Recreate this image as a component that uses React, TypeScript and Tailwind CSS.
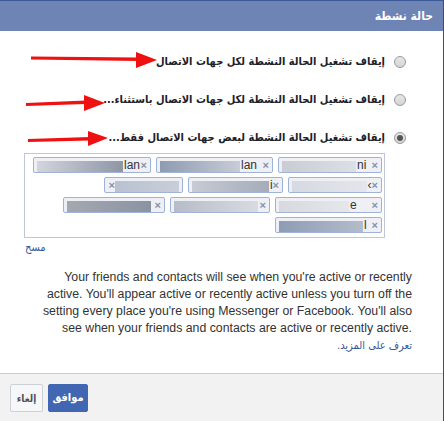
import React from 'react';

const arabic = { fontFamily: '"DejaVu Sans Condensed", "DejaVu Sans", Tahoma, sans-serif' };

type Token = {
  w: string;
  blur: string;
  grad: string;
  tail?: string;
  rtl?: boolean;
};

const tokens: Token[] = [
  { w: 'w-[104px]', blur: 'w-[74px]', grad: 'bg-gradient-to-r from-[#c9ccd3] to-[#dcdfe5]', tail: 'ni' },
  { w: 'w-[117px]', blur: 'w-[80px]', grad: 'bg-gradient-to-r from-[#8f9bb0] to-[#c8cdd6]', tail: 'lan' },
  { w: 'w-[118px]', blur: 'w-[86px]', grad: 'bg-gradient-to-r from-[#d3d5db] to-[#8e96a5]', tail: 'lan' },
  { w: 'w-[94px]', blur: 'w-[76px]', grad: 'bg-gradient-to-r from-[#d6d9e0] to-[#e4e6eb]', tail: '‹' },
  { w: 'w-[95px]', blur: 'w-[78px]', grad: 'bg-gradient-to-r from-[#c7cbd3] to-[#a5acb9]', tail: 'i' },
  { w: 'w-[79px]', blur: 'w-[64px]', grad: 'bg-gradient-to-r from-[#b9c2d1] to-[#c9ced8]', rtl: true },
  { w: 'w-[107px]', blur: 'w-[70px]', grad: 'bg-gradient-to-r from-[#d7d9df] to-[#e6e7eb]', tail: 'e' },
  { w: 'w-[100px]', blur: 'w-[84px]', grad: 'bg-gradient-to-r from-[#b6bcc8] to-[#d8dbe1]' },
  { w: 'w-[102px]', blur: 'w-[84px]', grad: 'bg-gradient-to-r from-[#a4a8b0] to-[#8b93a3]' },
  { w: 'w-[107px]', blur: 'w-[84px]', grad: 'bg-gradient-to-r from-[#8e9cb4] to-[#b4bccb]', tail: 'l' },
];

const Radio = ({ checked }: { checked?: boolean }) => (
  <div className="w-[12px] h-[12px] rounded-full border border-[#9a9a9a] bg-gradient-to-b from-[#e8e8e8] to-[#d4d4d4] flex items-center justify-center shrink-0">
    {checked && <div className="w-[6px] h-[6px] rounded-full bg-[#555]" />}
  </div>
);

const Option = ({ label, checked }: { label: string; checked?: boolean }) => (
  <div className="h-[24px] flex items-center gap-[9px]">
    <Radio checked={checked} />
    <span className="text-[11px] font-bold text-[#1d2129] whitespace-nowrap" style={arabic}>
      {label}
    </span>
  </div>
);

export default function App() {
  return (
    <div
      dir="rtl"
      className="relative w-[444px] h-[421px] bg-white border-r border-[#4d4d4d] flex flex-col overflow-hidden"
      style={{ fontFamily: '"Liberation Sans", Arial, sans-serif' }}
    >
      {/* header */}
      <div className="h-[31px] shrink-0 bg-[#6d84b4] border-t border-[#3b5998] flex items-center pr-[10px]">
        <span className="text-white text-[12px] font-bold" style={arabic}>
          حالة نشطة
        </span>
      </div>

      {/* body */}
      <div className="flex-1 pt-[19px]">
        <div className="pr-[37px] flex flex-col gap-[14px]">
          <Option label="إيقاف تشغيل الحالة النشطة لكل جهات الاتصال" />
          <Option label="إيقاف تشغيل الحالة النشطة لكل جهات الاتصال باستثناء..." />
          <Option label="إيقاف تشغيل الحالة النشطة لبعض جهات الاتصال فقط..." checked />
        </div>

        <div className="mt-[3px] mr-[58px] w-[361px] h-[85px] border border-[#bdc7d8] pt-[3px] pr-[2px] flex flex-wrap content-start gap-x-[5px] gap-y-[4px]">
          {tokens.map((t, i) => (
            <div
              key={i}
              dir={t.rtl ? 'rtl' : 'ltr'}
              className={`${t.w} h-[16px] border border-[#9fb3d6] rounded-[2px] bg-[#eef0f5] flex items-center px-[3px] text-[12px] leading-[14px] text-[#333]`}
            >
              <div className={`${t.blur} h-[11px] mt-[2px] ${t.grad}`} />
              {t.tail && <span className="ml-[1px]">{t.tail}</span>}
              <span className="ml-auto mr-0 text-[#8592ab] font-bold text-[11px]">×</span>
            </div>
          ))}
        </div>

        <div className="ml-[25px] mt-[2px] text-left text-[11px] leading-[14px]">
          <a href="#" className="text-[#365899]" style={arabic}>
            مسح
          </a>
        </div>

        <p
          dir="ltr"
          className="mt-[14px] pr-[31px] text-right text-[12.3px] leading-[17px] text-[#333] whitespace-nowrap"
        >
          Your friends and contacts will see when you're active or recently
          <br />
          active. You'll appear active or recently active unless you turn off the
          <br />
          setting every place you're using Messenger or Facebook. You'll also
          <br />
          see when your friends and contacts are active or recently active.
        </p>
        <div className="pr-[31px] text-[11px] leading-[16px]">
          <a href="#" className="text-[#365899]" style={arabic}>
            تعرف على المزيد.
          </a>
        </div>
      </div>

      {/* footer */}
      <div className="h-[48px] shrink-0 bg-[#f2f2f2] border-t border-[#ccc] flex justify-end items-start pt-[10px] pl-[10px] gap-[5px]">
        <button
          className="h-[28px] w-[40px] bg-[#4267b2] border border-[#4267b2] rounded-[2px] text-white text-[11px] font-bold"
          style={arabic}
        >
          موافق
        </button>
        <button
          className="h-[28px] w-[33px] bg-[#f6f7f9] border border-[#ced0d4] rounded-[2px] text-[#4b4f56] text-[10px] font-bold"
          style={arabic}
        >
          إلغاء
        </button>
      </div>

      {/* red annotation arrows */}
      <svg className="absolute top-0 left-0 pointer-events-none" width="444" height="421">
        <g fill="#ef1111">
          <polygon points="31,56.5 138,57.5 138,61 31,59.5" />
          <polygon points="136,52 157,60 136,68" />
          <polygon points="26,103 86,100.5 86,104 26,106" />
          <polygon points="84,95 105,103 84,111" />
          <polygon points="28,139 90,137 90,140.5 28,142" />
          <polygon points="88,131 108,138 88,146" />
        </g>
      </svg>
    </div>
  );
}
